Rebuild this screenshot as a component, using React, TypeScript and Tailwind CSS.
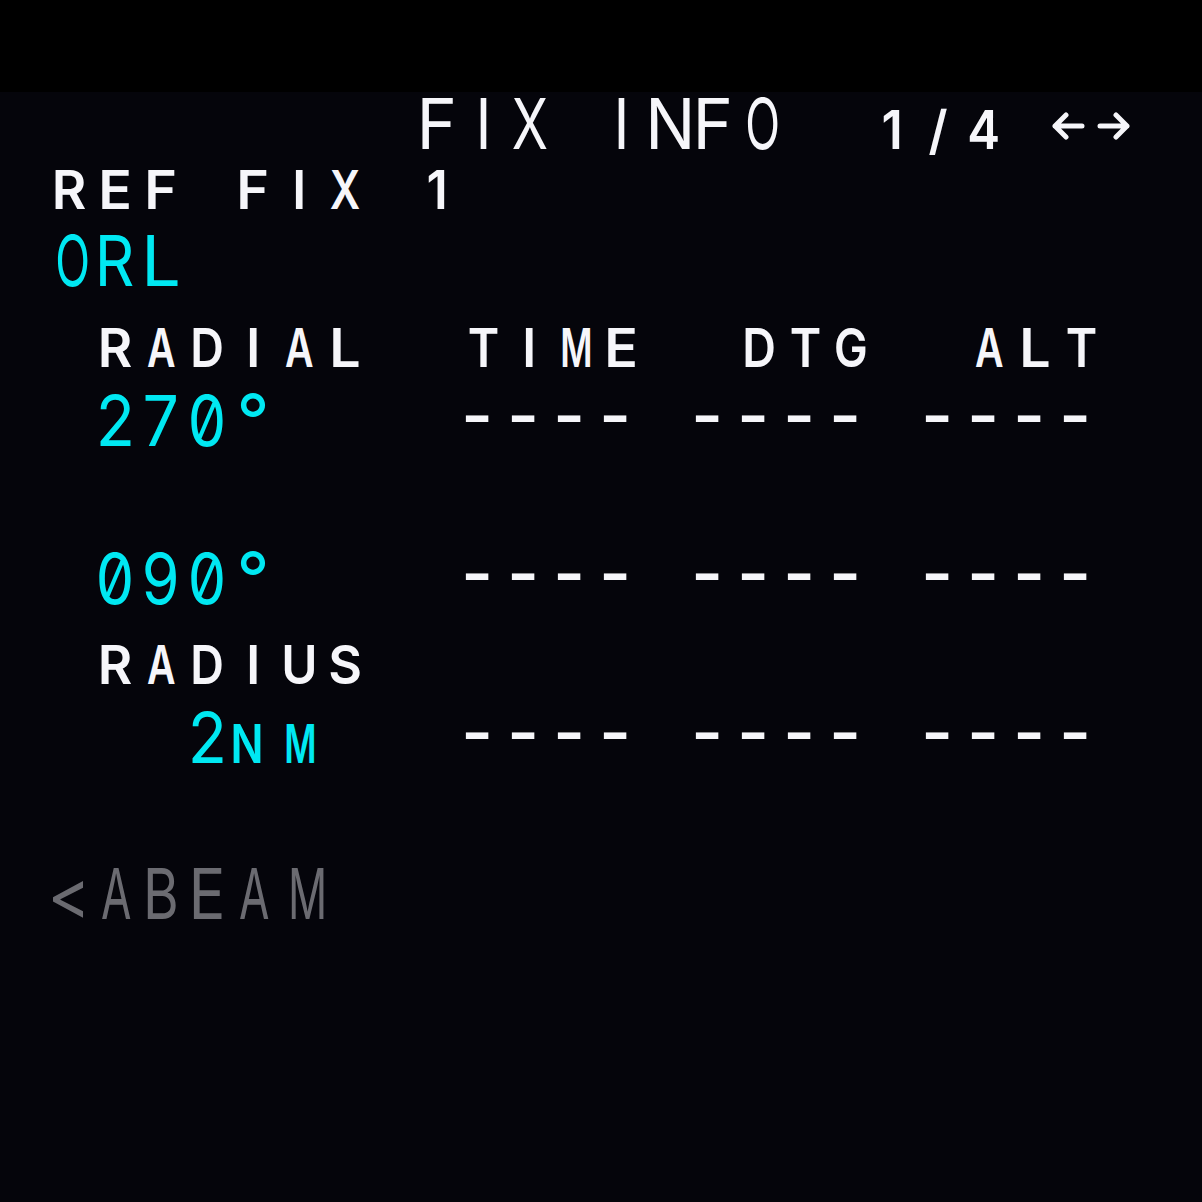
import React from 'react'

type Size = 'lg' | 'sm'

const WHITE = 'text-[#f6f6fa]'
const CYAN = 'text-[#00e8f2]'
const GRAY = 'text-[#6b6b71]'

// per-glyph horizontal squeeze so the proportional face reads like the MCDU font
const LG_SCALE: Record<string, string> = {
  A: 'scale-x-[0.63]',
  B: 'scale-x-[0.78]',
  E: 'scale-x-[0.88]',
  F: 'scale-x-[0.98]',
  L: 'scale-x-[1]',
  M: 'scale-x-[0.62]',
  N: 'scale-x-[0.95]',
  O: 'scale-x-[0.65]',
  R: 'scale-x-[0.88]',
  X: 'scale-x-[0.76]',
  '0': 'scale-x-[0.87]',
  '2': 'scale-x-[0.92]',
  '7': 'scale-x-[0.92]',
  '9': 'scale-x-[0.87]',
  '<': 'scale-x-[0.93]',
  '°': 'scale-x-[1.05] scale-y-[1.05]',
}

const SM_SCALE: Record<string, string> = {
  R: 'scale-x-[1]',
  E: 'scale-x-[1.05]',
  F: 'scale-x-[1.05]',
  X: 'scale-x-[0.8]',
  A: 'scale-x-[0.74]',
  D: 'scale-x-[0.88]',
  L: 'scale-x-[1.05]',
  T: 'scale-x-[0.9]',
  M: 'scale-x-[0.66]',
  G: 'scale-x-[0.85]',
  U: 'scale-x-[0.93]',
  S: 'scale-x-[0.98]',
  N: 'scale-x-[0.82]',
  '4': 'scale-x-[0.93]',
}

function Cells({ text, size, color }: { text: string; size: Size; color: string }) {
  return (
    <>
      {text.split('').map((ch, i) => {
        let inner = ''
        if (ch === '-') inner = '-translate-x-[6px] -translate-y-[6px] scale-y-[1.15]'
        else if (size === 'lg') inner = LG_SCALE[ch] ?? 'scale-x-[0.85]'
        else inner = SM_SCALE[ch] ?? 'scale-x-[0.95]'
        return (
          <span
            key={i}
            className={
              'inline-block w-[46px] text-center ' +
              color +
              (size === 'lg' ? ' text-[70px] font-normal' : ' text-[53px] font-semibold')
            }
          >
            <span className={'inline-block ' + inner}>{ch === ' ' ? '\u00a0' : ch}</span>
          </span>
        )
      })}
    </>
  )
}

function Row({ h, children }: { h: string; children: React.ReactNode }) {
  return <div className={'flex items-baseline leading-[0.9] ' + h}>{children}</div>
}

function PageArrows() {
  return (
    <svg
      width="80"
      height="28"
      viewBox="0 0 80 28"
      className="ml-[44px] mt-[20px] self-start"
      fill="none"
      stroke="#f6f6fa"
      strokeWidth="5"
      strokeLinecap="round"
      strokeLinejoin="round"
    >
      <path d="M4 14 H31 M15 3 L4 14 L15 25" />
      <path d="M49 14 H76 M65 3 L76 14 L65 25" />
    </svg>
  )
}

export default function App() {
  return (
    <div
      className="w-[1202px] h-[1202px] flex flex-col bg-[#05050b] overflow-hidden slashed-zero"
      style={{ fontFamily: 'Inter, "Noto Sans", sans-serif' }}
    >
      {/* top band */}
      <div className="h-[92px] bg-black shrink-0" />

      {/* title */}
      <Row h="h-[75px]">
        <Cells text="         FIX INFO  " size="lg" color={WHITE} />
        <span className="-ml-[5px] flex items-baseline">
          <Cells text="1/4" size="sm" color={WHITE} />
        </span>
        <PageArrows />
      </Row>

      {/* ref fix */}
      <Row h="h-[62px]">
        <Cells text=" REF FIX 1" size="sm" color={WHITE} />
      </Row>
      <Row h="h-[96px]">
        <Cells text=" ORL" size="lg" color={CYAN} />
      </Row>

      {/* radials */}
      <Row h="h-[64px]">
        <Cells text="  RADIAL  TIME  DTG  ALT" size="sm" color={WHITE} />
      </Row>
      <Row h="h-[158px]">
        <Cells text="  270°" size="lg" color={CYAN} />
        <Cells text="    ---- ---- ----" size="lg" color={WHITE} />
      </Row>
      <Row h="h-[95px]">
        <Cells text="  090°" size="lg" color={CYAN} />
        <Cells text="    ---- ---- ----" size="lg" color={WHITE} />
      </Row>

      {/* radius */}
      <Row h="h-[64px]">
        <Cells text="  RADIUS" size="sm" color={WHITE} />
      </Row>
      <Row h="h-[156px]">
        <Cells text="    2" size="lg" color={CYAN} />
        <span className="-ml-[6px] flex items-baseline">
          <Cells text="N" size="sm" color={CYAN} />
        </span>
        <span className="ml-[6px] flex items-baseline">
          <Cells text="M" size="sm" color={CYAN} />
        </span>
        <Cells text="   ---- ---- ----" size="lg" color={WHITE} />
      </Row>

      {/* abeam */}
      <Row h="h-[80px]">
        <Cells text=" <ABEAM" size="lg" color={GRAY} />
      </Row>
    </div>
  )
}
